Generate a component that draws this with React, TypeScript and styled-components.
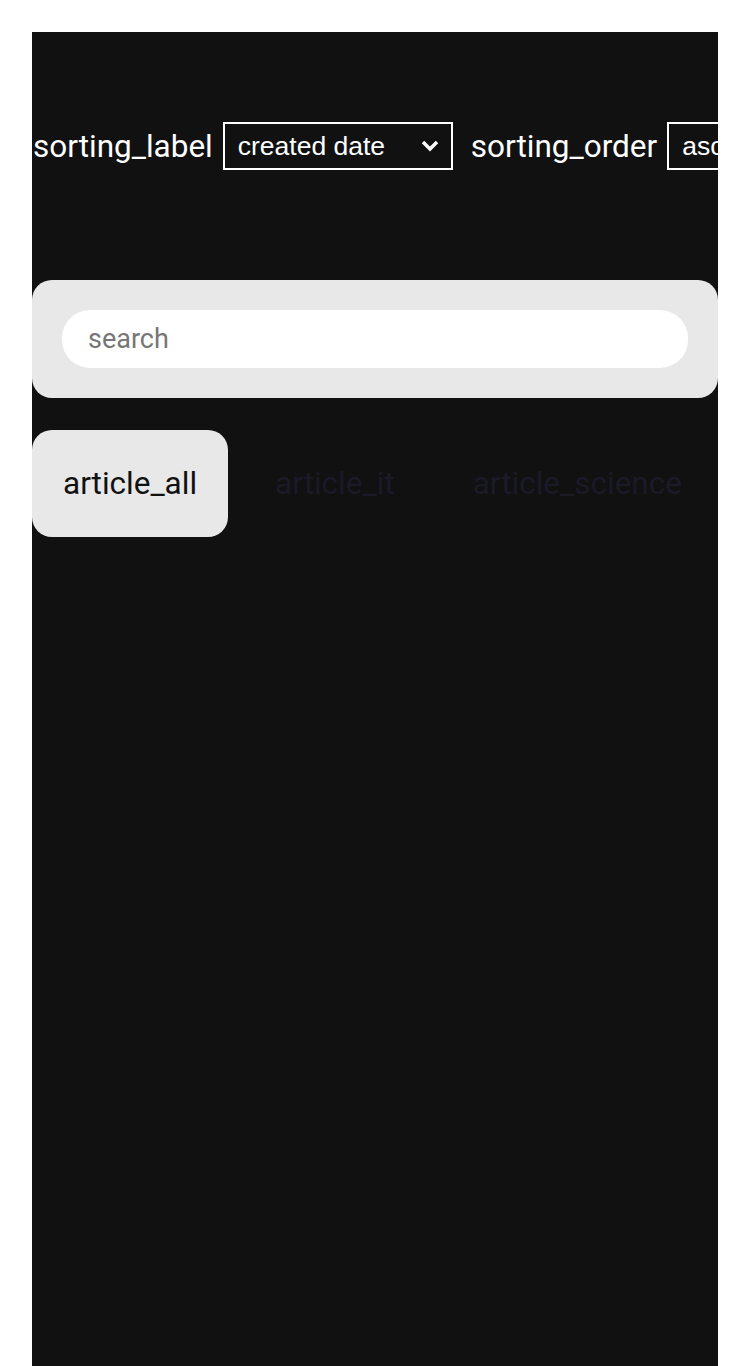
import styled, { createGlobalStyle } from 'styled-components';

const GlobalStyle = createGlobalStyle`
  body {
    margin: 32px;
    background: #ffffff;
    font-family: Roboto, "Liberation Sans", sans-serif;
  }
`;

const Page = styled.div`
  background: #111111;
  min-height: 100vh;
  width: 686px;
  padding-top: 90px;
`;

const SortBar = styled.div`
  display: flex;
  align-items: center;
  white-space: nowrap;
  height: 48px;
`;

const SortLabel = styled.label`
  color: #ffffff;
  font-size: 31.5px;
  flex-shrink: 0;
  margin: 0 10px 0 1px;
`;

const SelectWrap = styled.div<{ $width: number }>`
  position: relative;
  flex-shrink: 0;
  width: ${(p) => p.$width}px;
  height: 48px;
  margin-right: 17px;
`;

const SortSelect = styled.select`
  appearance: none;
  -webkit-appearance: none;
  width: 100%;
  height: 100%;
  background: #111111;
  color: #ffffff;
  border: 2px solid #ffffff;
  border-radius: 0;
  font-family: Arial, "Liberation Sans", sans-serif;
  font-size: 26.5px;
  padding: 0 40px 0 13px;
  outline: none;
  option {
    color: #000;
    background: #fff;
  }
`;

const Chevron = styled.svg`
  position: absolute;
  right: 14px;
  top: 17px;
  width: 18px;
  height: 14px;
  pointer-events: none;
`;

const SearchPanel = styled.div`
  margin-top: 110px;
  background: #e8e8e8;
  border-radius: 20px;
  padding: 30px;
`;

const SearchInput = styled.input`
  display: block;
  width: 100%;
  box-sizing: border-box;
  height: 58px;
  border: none;
  outline: none;
  border-radius: 28px;
  background: #ffffff;
  padding: 0 26px;
  font-family: Roboto, sans-serif;
  font-size: 27px;
  color: #111;
  &::placeholder {
    color: #767676;
  }
`;

const Tabs = styled.div`
  display: flex;
  gap: 16px;
  margin-top: 32px;
`;

const Tab = styled.button<{ $active?: boolean }>`
  flex-shrink: 0;
  border: none;
  border-radius: 20px;
  padding: 0 31px;
  height: 107px;
  font-family: Roboto, sans-serif;
  font-size: 31.5px;
  cursor: pointer;
  background: ${(p) => (p.$active ? '#e8e8e8' : 'transparent')};
  color: ${(p) => (p.$active ? '#111111' : '#1b1a27')};
`;

const tabs = ['article_all', 'article_it', 'article_science'];

const Select = ({ width, value, options }: { width: number; value: string; options: string[] }) => (
  <SelectWrap $width={width}>
    <SortSelect defaultValue={value}>
      {options.map((o) => (
        <option key={o} value={o}>
          {o}
        </option>
      ))}
    </SortSelect>
    <Chevron viewBox="0 0 18 14">
      <path d="M2 3 L9 10 L16 3" fill="none" stroke="#fff" strokeWidth="3.4" />
    </Chevron>
  </SelectWrap>
);

export default function App() {
  return (
    <>
      <GlobalStyle />
      <Page>
        <SortBar>
          <SortLabel>sorting_label</SortLabel>
          <Select width={230} value="created date" options={['created date', 'title']} />
          <SortLabel>sorting_order</SortLabel>
          <Select width={120} value="asc" options={['asc', 'desc']} />
        </SortBar>
        <SearchPanel>
          <SearchInput placeholder="search" />
        </SearchPanel>
        <Tabs>
          {tabs.map((t, i) => (
            <Tab key={t} $active={i === 0}>
              {t}
            </Tab>
          ))}
        </Tabs>
      </Page>
    </>
  );
}
